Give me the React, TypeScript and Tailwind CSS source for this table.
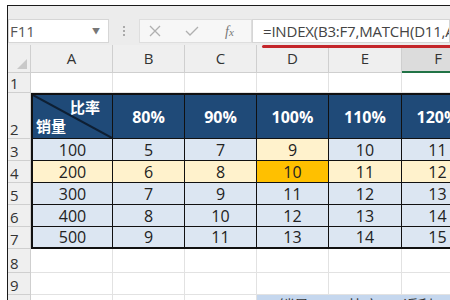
import React from "react";

const GRID = "grid grid-cols-[23px_82px_72px_72px_72px_73px_72px]";
const FONT = { fontFamily: '"Open Sans", "Noto Sans CJK SC", sans-serif' };

const data: { n: string; v: string[] }[] = [
  { n: "100", v: ["5", "7", "9", "10", "11"] },
  { n: "200", v: ["6", "8", "10", "11", "12"] },
  { n: "300", v: ["7", "9", "11", "12", "13"] },
  { n: "400", v: ["8", "10", "12", "13", "14"] },
  { n: "500", v: ["9", "11", "13", "14", "15"] },
];

function RowNum({ n, h }: { n: string; h: string }) {
  return (
    <div className={`${h} bg-[#efefef] border-r border-b border-[#cfcfcf] flex items-end pl-[2px] pb-[0px] text-[15px] leading-[18px] text-[#333]`}>
      {n}
    </div>
  );
}

function Blank({ h }: { h: string }) {
  return <div className={`${h} border-r border-b border-[#e2e2e2] bg-white`} />;
}

export default function App() {
  return (
    <div className="w-[450px] h-[300px] overflow-hidden bg-white pt-[5px] pl-[7px] relative" style={FONT}>
      <div className="border-t border-l border-[#1a1a1a] h-full overflow-hidden">
        {/* formula bar */}
        <div className="h-[39px] bg-[#ececec] flex items-end pb-[2px] whitespace-nowrap">
          <div className="w-[101px] h-[24px] bg-white border border-[#d6d6d6] flex items-center justify-between pl-[1px] pr-[8px] text-[15px] text-[#555]">
            <span>F11</span>
            <span className="text-[8px] text-[#777]">▼</span>
          </div>
          <div className="w-[30px] h-[24px] flex flex-col items-center justify-center gap-[2px]">
            <div className="w-[2px] h-[2px] bg-[#aaa]" />
            <div className="w-[2px] h-[2px] bg-[#aaa]" />
            <div className="w-[2px] h-[2px] bg-[#aaa]" />
          </div>
          <div className="w-[113px] h-[24px] bg-[#f7f7f7] border border-[#dedede] flex items-center text-[#b5b5b5]">
            <svg width="12" height="12" viewBox="0 0 12 12" className="ml-[9px]">
              <path d="M1 1 L11 11 M11 1 L1 11" stroke="#b0b0b0" strokeWidth="1.3" />
            </svg>
            <svg width="14" height="12" viewBox="0 0 14 12" className="ml-[24px]">
              <path d="M1 6 L5 10 L13 2" stroke="#b0b0b0" strokeWidth="1.3" fill="none" />
            </svg>
            <span className="ml-[26px] italic text-[14px] text-[#777]" style={{ fontFamily: '"Liberation Serif", serif' }}>
              f<span className="text-[11px]">x</span>
            </span>
          </div>
          <div className="flex-1 h-[24px] bg-white border border-[#d6d6d6] flex items-center pl-[10px] text-[15px] text-[#444] overflow-hidden tracking-[-0.2px]">
            =INDEX(B3:F7,MATCH(D11,A2:A7,0),MATCH(D12,B2:F2,0))
          </div>
        </div>

        {/* column headers */}
        <div className={`${GRID} h-[28px] bg-[#efefef] text-[15px] text-[#333]`}>
          <div className="border-r border-b border-[#cfcfcf] relative">
            <svg width="10" height="10" className="absolute right-[3px] bottom-[3px]" viewBox="0 0 10 10">
              <path d="M10 0 L10 10 L0 10 Z" fill="#c9c9c9" />
            </svg>
          </div>
          {["A", "B", "C", "D", "E"].map((c) => (
            <div key={c} className="border-r border-b border-[#cfcfcf] flex items-center justify-center">
              {c}
            </div>
          ))}
          <div className="bg-[#dcdcdc] border-b-2 border-[#217346] flex items-center justify-center">F</div>
        </div>

        {/* row 1 */}
        <div className={`${GRID} text-[15px]`}>
          <RowNum n="1" h="h-[20px]" />
          {[0, 1, 2, 3, 4, 5].map((i) => (
            <Blank key={i} h="h-[20px]" />
          ))}
        </div>

        {/* row 2 header */}
        <div className={`${GRID}`}>
          <RowNum n="2" h="h-[46px]" />
          <div className="h-[46px] bg-[#1f4a78] border-t-2 border-l-2 border-r border-b border-[#111] relative text-white font-bold text-[15px]">
            <svg className="absolute inset-0" width="100%" height="100%" preserveAspectRatio="none" viewBox="0 0 100 100">
              <path d="M0 0 L100 100" stroke="#0e1f33" strokeWidth="2" vectorEffect="non-scaling-stroke" />
            </svg>
            <span className="absolute right-[12px] top-[1px]">比率</span>
            <span className="absolute left-[3px] bottom-[1px]">销量</span>
          </div>
          {["80%", "90%", "100%", "110%", "120%"].map((p) => (
            <div key={p} className="h-[46px] bg-[#1f4a78] border-t-2 border-r border-b border-[#111] flex items-center justify-center text-white font-bold text-[16px]">
              {p}
            </div>
          ))}
        </div>

        {/* data rows */}
        {data.map((r, ri) => {
          const last = ri === data.length - 1;
          const rowBg = ri === 1 ? "bg-[#fff2cc]" : "bg-[#dce6f2]";
          return (
            <div key={r.n} className={`${GRID} text-[16px] text-[#222]`}>
              <RowNum n={String(ri + 3)} h="h-[22px]" />
              <div className={`h-[22px] ${rowBg} border-l-2 border-r border-[#111] ${last ? "border-b-2" : "border-b"} flex items-center justify-center leading-none`}>
                {r.n}
              </div>
              {r.v.map((v, ci) => {
                let bg = rowBg;
                if (ci === 2 && ri === 0) bg = "bg-[#fff2cc]";
                if (ci === 2 && ri === 1) bg = "bg-[#ffc000]";
                return (
                  <div key={ci} className={`h-[22px] ${bg} border-r border-[#111] ${last ? "border-b-2" : "border-b"} flex items-center justify-center leading-none`}>
                    {v}
                  </div>
                );
              })}
            </div>
          );
        })}

        {/* row 8 */}
        <div className={`${GRID} text-[15px]`}>
          <RowNum n="8" h="h-[24px]" />
          {[0, 1, 2, 3, 4, 5].map((i) => (
            <Blank key={i} h="h-[24px]" />
          ))}
        </div>
        {/* row 9 */}
        <div className={`${GRID} text-[15px]`}>
          <RowNum n="9" h="h-[22px]" />
          {[0, 1, 2, 3, 4, 5].map((i) => (
            <Blank key={i} h="h-[22px]" />
          ))}
        </div>

        {/* row 10 */}
        <div className={`${GRID} text-[15px]`}>
          <RowNum n="10" h="h-[46px]" />
          <Blank h="h-[46px]" />
          <Blank h="h-[46px]" />
          <Blank h="h-[46px]" />
          <div className="h-[46px] bg-[#c5d7ee] pl-[22px] pt-[1px] text-[15px] leading-[18px] text-[#333]">销量</div>
          <div className="h-[46px] bg-[#c5d7ee] pl-[20px] pt-[1px] text-[15px] leading-[18px] text-[#333]">比率</div>
          <div className="h-[46px] bg-[#c5d7ee] pl-[1px] pt-[1px] text-[15px] leading-[18px] text-[#333]">返利</div>
        </div>
      </div>

      {/* red annotation underline */}
      <div className="absolute left-[262px] top-[45px] w-[190px] h-[3px] bg-[#c4262b] rounded-l-full" />
    </div>
  );
}
